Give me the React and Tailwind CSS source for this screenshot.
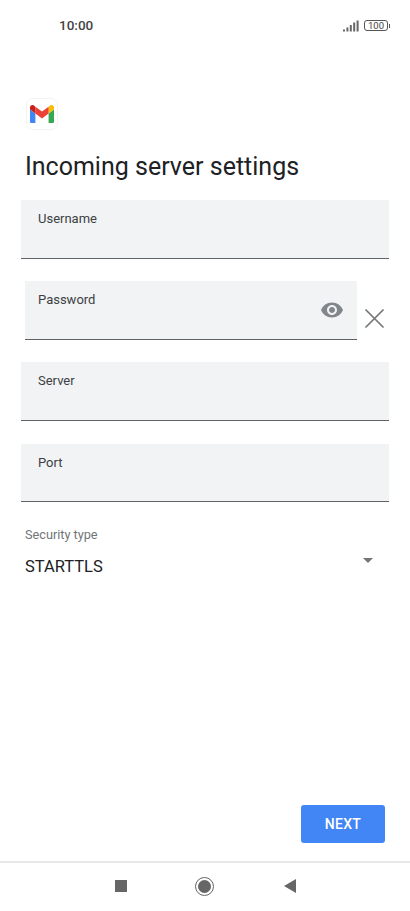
function Field({ label, className = '' }) {
  return (
    <div className={`bg-[#f1f3f4] border-b border-[#5f6368] pt-[10px] ${className}`}>
      <span className="block text-[13px] leading-[18px] text-[#3c4043]">{label}</span>
    </div>
  );
}

function GmailLogo() {
  return (
    <svg width="24" height="18" viewBox="0 0 24 18">
      <path d="M1.6 18H5.4V8.6L0 4.6V16.4C0 17.3.7 18 1.6 18Z" fill="#4285f4" />
      <path d="M18.6 18H22.4C23.3 18 24 17.3 24 16.4V4.6L18.6 8.6Z" fill="#34a853" />
      <path d="M18.6 1.7V8.6L24 4.6V2.4C24 .4 21.7-.7 20.2.5Z" fill="#fbbc04" />
      <path d="M5.4 8.6V1.7L12 6.6 18.6 1.7V8.6L12 13.5Z" fill="#ea4335" />
      <path d="M0 2.4V4.6L5.4 8.6V1.7L3.8.5C2.3-.7 0 .4 0 2.4Z" fill="#c5221f" />
    </svg>
  );
}

export default function App() {
  return (
    <div className="w-[410px] h-[911px] bg-white flex flex-col font-['Roboto',sans-serif] text-[#202124] overflow-hidden">
      <div className="h-[51px] shrink-0 flex items-center justify-between pl-[59px] pr-[20px]">
        <span className="text-[13.5px] font-medium text-[#444]">10:00</span>
        <div className="flex items-center gap-[5px]">
          <svg width="16" height="12" viewBox="0 0 16 12" fill="#666">
            <rect x="0" y="9.5" width="2" height="2" />
            <rect x="3.4" y="7.5" width="2" height="4" />
            <rect x="6.8" y="5" width="2" height="6.5" />
            <rect x="10.2" y="2.5" width="2" height="9" />
            <rect x="13.6" y="0.5" width="2" height="11" />
          </svg>
          <div className="flex items-center gap-[1px]">
            <div className="w-[24px] h-[11px] border border-[#555] rounded-[3px] flex items-center justify-center text-[9.5px] leading-none text-[#444]">
              100
            </div>
            <div className="w-[1px] h-[4px] bg-[#555]" />
          </div>
        </div>
      </div>

      <div className="pl-[26px] pt-[47px]">
        <div className="w-[32px] h-[32px] rounded-[7px] border border-[#f3f3f3] flex items-center justify-center">
          <GmailLogo />
        </div>
      </div>

      <h1 className="mt-[21px] pl-[25px] text-[25px] leading-[32px] font-normal">Incoming server settings</h1>

      <div className="mt-[17px] flex flex-col">
        <Field label="Username" className="h-[59px] mx-[21px] pl-[17px]" />
        <div className="mt-[22px] ml-[25px] flex items-start">
          <div className="relative w-[332px]">
            <Field label="Password" className="h-[59px] pl-[13px]" />
            <svg className="absolute right-[13px] top-[17px]" width="24" height="24" viewBox="0 0 24 24" fill="#80868b">
              <path d="M12 4.5C7 4.5 2.73 7.61 1 12c1.73 4.39 6 7.5 11 7.5s9.27-3.11 11-7.5c-1.73-4.39-6-7.5-11-7.5zM12 17c-2.76 0-5-2.24-5-5s2.24-5 5-5 5 2.24 5 5-2.24 5-5 5zm0-8c-1.66 0-3 1.34-3 3s1.34 3 3 3 3-1.34 3-3-1.34-3-3-3z" />
            </svg>
          </div>
          <svg className="ml-[8px] mt-[28px]" width="19" height="19" viewBox="0 0 19 19" stroke="#757575" strokeWidth="1.7" strokeLinecap="round">
            <path d="M1 1L18 18M18 1L1 18" />
          </svg>
        </div>
        <Field label="Server" className="h-[59px] mt-[22px] mx-[21px] pl-[17px]" />
        <Field label="Port" className="h-[58px] mt-[23px] mx-[21px] pl-[17px]" />
      </div>

      <div className="mt-[24px] px-[25px] relative">
        <span className="block text-[12.7px] leading-[18px] text-[#70757a]">Security type</span>
        <span className="block mt-[13px] text-[16.5px] leading-[20px] text-[#202124]">STARTTLS</span>
        <div className="absolute right-[37px] top-[32px] w-0 h-0 border-x-[5px] border-x-transparent border-t-[5px] border-t-[#757575]" />
      </div>

      <div className="flex-1 flex items-end justify-end pr-[25px] pb-[18px]">
        <button className="w-[84px] h-[38px] rounded-[3px] bg-[#4285f4] text-white text-[14px] font-medium tracking-[0.3px]">NEXT</button>
      </div>

      <div className="h-[50px] shrink-0 border-t-2 border-[#e8e8e8] flex items-center pl-[115px] pb-[2px]">
        <div className="w-[12px] h-[12px] bg-[#666]" />
        <div className="ml-[68px] w-[19px] h-[19px] rounded-full border-[1.5px] border-[#666] flex items-center justify-center">
          <div className="w-[13px] h-[13px] rounded-full bg-[#666]" />
        </div>
        <svg className="ml-[70px]" width="12" height="14" viewBox="0 0 12 14" fill="#666">
          <path d="M12 0V14L0 7Z" />
        </svg>
      </div>
    </div>
  );
}
